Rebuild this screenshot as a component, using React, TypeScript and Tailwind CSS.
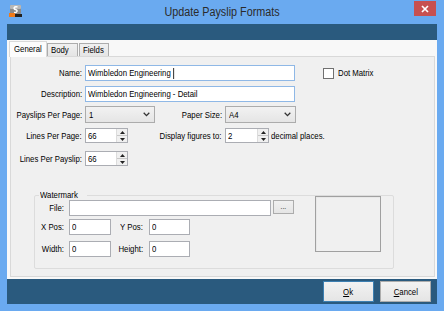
import React from "react";

function L({ children }: { children: React.ReactNode }) {
  return <span className="inline-block whitespace-nowrap scale-x-[0.82] origin-left">{children}</span>;
}
function R({ children }: { children: React.ReactNode }) {
  return <span className="inline-block whitespace-nowrap scale-x-[0.82] origin-right">{children}</span>;
}
function C({ children }: { children: React.ReactNode }) {
  return <span className="inline-block whitespace-nowrap scale-x-[0.82] origin-center">{children}</span>;
}

function Label({ w, children }: { w: string; children: React.ReactNode }) {
  return (
    <div className={`${w} flex justify-end`}>
      <R>{children}</R>
    </div>
  );
}

function AppIcon() {
  return (
    <svg width="13" height="13" viewBox="0 0 13 13">
      <rect x="1" y="0" width="11" height="9" rx="1" fill="#8a8a8a" />
      <rect x="1" y="0" width="11" height="4" rx="1" fill="#b8b8b8" />
      <path d="M8.5 2 C5 1 4 4 6.5 4.5 C9 5 8.5 8 5 7.5" stroke="#fff" strokeWidth="1.5" fill="none" />
      <rect x="0" y="8" width="6" height="4" fill="#f07a1a" />
      <rect x="6" y="9" width="7" height="3" fill="#222" />
    </svg>
  );
}

function Chevron() {
  return (
    <svg width="7" height="5" viewBox="0 0 7 5">
      <path d="M0.7 0.8 L3.5 3.6 L6.3 0.8" stroke="#333" strokeWidth="1.3" fill="none" />
    </svg>
  );
}

function Combo({ value, w }: { value: string; w: string }) {
  return (
    <div className={`${w} h-[17px] border border-[#acacac] bg-gradient-to-b from-[#f2f2f2] to-[#e5e5e5] flex items-center justify-between pl-[3px] pr-[4px]`}>
      <L>{value}</L>
      <Chevron />
    </div>
  );
}

function Spinner({ value, w }: { value: string; w: string }) {
  return (
    <div className={`${w} h-[15px] border border-[#abadb3] bg-white flex`}>
      <div className="flex-1 flex items-center pl-[2px]">
        <L>{value}</L>
      </div>
      <div className="w-[11px] flex flex-col border-l border-[#dcdcdc]">
        <div className="flex-1 bg-[#f0f0f0] border-b border-[#c8c8c8] flex items-center justify-center">
          <svg width="5" height="3" viewBox="0 0 5 3"><path d="M0 3 L2.5 0 L5 3 Z" fill="#222" /></svg>
        </div>
        <div className="flex-1 bg-[#f0f0f0] flex items-center justify-center">
          <svg width="5" height="3" viewBox="0 0 5 3"><path d="M0 0 L2.5 3 L5 0 Z" fill="#222" /></svg>
        </div>
      </div>
    </div>
  );
}

function TextBox({ value, w, blue }: { value: string; w: string; blue?: boolean }) {
  return (
    <div className={`${w} h-[16px] border ${blue ? "border-[#8fb8e6]" : "border-[#abadb3]"} bg-white flex items-center pl-[2px] overflow-hidden`}>
      <L>{value}</L>
    </div>
  );
}

function Button({ children, def }: { children: React.ReactNode; def?: boolean }) {
  return (
    <div className={`w-[51px] h-[21px] border ${def ? "border-[#3c7fb1]" : "border-[#acacac]"} bg-gradient-to-b from-[#f2f2f2] to-[#e5e5e5] flex items-center justify-center`}>
      <C>{children}</C>
    </div>
  );
}

export default function App() {
  return (
    <div className="w-[444px] h-[311px] bg-[#6aaaf0] flex flex-col font-['Liberation_Sans',Arial,sans-serif] text-[9.5px] leading-none text-black overflow-hidden">
      {/* Title bar */}
      <div className="h-[24px] grid grid-cols-[1fr_auto_1fr] items-start">
        <div className="pl-[9px] pt-[5px]">
          <AppIcon />
        </div>
        <div className="pt-[5px] text-[12px] leading-[14px] text-[#2b2b2b] whitespace-nowrap">
          <span className="inline-block scale-x-[0.9] origin-center">Update Payslip Formats</span>
        </div>
        <div className="flex justify-end pr-[8px] pt-[1px]">
          <div className="w-[22px] h-[15px] bg-[#c75050] flex items-center justify-center">
            <svg width="8" height="8" viewBox="0 0 8 8">
              <path d="M1 1 L7 7 M7 1 L1 7" stroke="#fff" strokeWidth="1.7" />
            </svg>
          </div>
        </div>
      </div>

      {/* Client */}
      <div className="mx-[7px] flex-1 bg-[#2a5a7e] flex flex-col">
        <div className="h-[16px]" />
        <div className="h-[239px] bg-[#f8f8f8] flex flex-col">
          {/* Tabs */}
          <div className="h-[16px] flex items-end pl-[2px] relative z-10">
            <div className="w-[38px] h-[16px] mb-[-1px] bg-[#fcfcfc] border-l border-t border-r border-[#d9d9d9] flex items-center pl-[4px] pb-[1px]">
              <L>General</L>
            </div>
            <div className="w-[31px] h-[13px] bg-gradient-to-b from-[#f0f0f0] to-[#e5e5e5] border-l border-t border-r border-[#acacac] flex items-center pl-[3px]">
              <L>Body</L>
            </div>
            <div className="w-[30px] h-[13px] ml-[1px] bg-gradient-to-b from-[#f0f0f0] to-[#e5e5e5] border-l border-t border-r border-[#acacac] flex items-center pl-[3px]">
              <L>Fields</L>
            </div>
          </div>
          {/* Page */}
          <div className="ml-[3px] mr-[2px] h-[221px] border border-[#d9d9d9] bg-[#f0f0f0] pt-[8px] flex flex-col">
            {/* Row 1 */}
            <div className="h-[16px] flex items-center">
              <Label w="w-[71px]">Name:</Label>
              <div className="ml-[3px] w-[210px] h-[16px] border border-[#8fb8e6] bg-white flex items-center pl-[2px]">
                <L>
                  Wimbledon Engineering&nbsp;
                  <span className="inline-block w-[1.3px] h-[11px] bg-black align-middle" />
                </L>
              </div>
              <div className="ml-[28px] w-[11px] h-[11px] border border-[#707070] bg-white" />
              <div className="ml-[4px]">
                <L>Dot Matrix</L>
              </div>
            </div>
            {/* Row 2 */}
            <div className="mt-[5px] h-[16px] flex items-center">
              <Label w="w-[71px]">Description:</Label>
              <div className="ml-[3px]">
                <TextBox value="Wimbledon Engineering - Detail" w="w-[210px]" blue />
              </div>
            </div>
            {/* Row 3 */}
            <div className="mt-[4px] h-[17px] flex items-center">
              <Label w="w-[71px]">Payslips Per Page:</Label>
              <div className="ml-[3px]">
                <Combo value="1" w="w-[70px]" />
              </div>
              <Label w="w-[67px]">Paper Size:</Label>
              <div className="ml-[3px]">
                <Combo value="A4" w="w-[71px]" />
              </div>
            </div>
            {/* Row 4 */}
            <div className="mt-[5px] h-[15px] flex items-center">
              <Label w="w-[71px]">Lines Per Page:</Label>
              <div className="ml-[3px]">
                <Spinner value="66" w="w-[43px]" />
              </div>
              <Label w="w-[94px]">Display figures to:</Label>
              <div className="ml-[3px]">
                <Spinner value="2" w="w-[44px]" />
              </div>
              <div className="ml-[2px]">
                <L>decimal places.</L>
              </div>
            </div>
            {/* Row 5 */}
            <div className="mt-[8px] h-[15px] flex items-center">
              <Label w="w-[71px]">Lines Per Payslip:</Label>
              <div className="ml-[3px]">
                <Spinner value="66" w="w-[43px]" />
              </div>
            </div>
            {/* Watermark group */}
            <fieldset className="mt-[24px] ml-[23px] w-[360px] border border-[#dcdcdc] rounded-[2px]">
              <legend className="ml-[4px] px-[1px] leading-[10px]">
                <L>Watermark</L>
              </legend>
              <div className="flex items-start pb-[11px]">
                <div className="w-[259px] flex flex-col">
                  <div className="h-[16px] flex items-center">
                    <Label w="w-[29px]">File:</Label>
                    <div className="ml-[5px]">
                      <TextBox value="" w="w-[202px]" />
                    </div>
                    <div className="ml-[2px] w-[21px] h-[14px] self-start border border-[#acacac] bg-gradient-to-b from-[#f0f0f0] to-[#e5e5e5] flex items-center justify-center text-[8px]">
                      <C>...</C>
                    </div>
                  </div>
                  <div className="mt-[3px] h-[16px] flex items-center">
                    <Label w="w-[29px]">X Pos:</Label>
                    <div className="ml-[5px]">
                      <TextBox value="0" w="w-[42px]" />
                    </div>
                    <Label w="w-[32px]">Y Pos:</Label>
                    <div className="ml-[6px]">
                      <TextBox value="0" w="w-[41px]" />
                    </div>
                  </div>
                  <div className="mt-[6px] h-[16px] flex items-center">
                    <Label w="w-[29px]">Width:</Label>
                    <div className="ml-[5px]">
                      <TextBox value="0" w="w-[42px]" />
                    </div>
                    <Label w="w-[32px]">Height:</Label>
                    <div className="ml-[6px]">
                      <TextBox value="0" w="w-[41px]" />
                    </div>
                  </div>
                </div>
                <div className="ml-[21px] -mt-[4px] w-[66px] h-[56px] border border-[#a0a0a0] shadow-[inset_1px_1px_0_#e8e8e8]" />
              </div>
            </fieldset>
          </div>
        </div>
        {/* Bottom buttons */}
        <div className="flex-1 flex justify-end items-start pt-[2px] pr-[6px] gap-[6px]">
          <Button def>
            <u>O</u>k
          </Button>
          <Button>
            <u>C</u>ancel
          </Button>
        </div>
      </div>
      <div className="h-[7px]" />
    </div>
  );
}
